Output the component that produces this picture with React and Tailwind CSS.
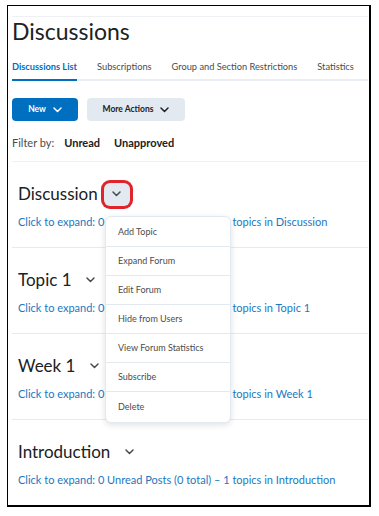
import React from "react";

const Chevron = ({ className = "", color = "#494c4e" }) => (
  <svg width="9" height="6" viewBox="0 0 9 6" className={className}>
    <path d="M1 1 L4.5 4.5 L8 1" fill="none" stroke={color} strokeWidth="1.5" strokeLinecap="round" strokeLinejoin="round" />
  </svg>
);

const sections = [
  { title: "Discussion", highlight: true },
  { title: "Topic 1" },
  { title: "Week 1" },
  { title: "Introduction" },
];

const menuItems = [
  "Add Topic",
  "Expand Forum",
  "Edit Forum",
  "Hide from Users",
  "View Forum Statistics",
  "Subscribe",
  "Delete",
];

export default function App() {
  return (
    <div className="w-[379px] h-[516px] bg-white pt-[5px] pl-[7px]" style={{ fontFamily: "Lato, 'Open Sans', sans-serif" }}>
      <div className="relative w-[364px] h-[502px] border border-r-2 border-b-2 border-black pl-[4px] pr-[1px] pt-[10px]">
        <div className="border-t border-[#eef0f3]" />
        <h1 className="h-[28px] text-[23px] leading-[28px] text-[#202122]">Discussions</h1>
        <div className="mt-[14px] flex gap-[20px] border-b-2 border-[#eaeef3] text-[9.25px] text-[#494c4e] h-[22px] whitespace-nowrap">
          <div className="relative font-bold text-[#006fbf] leading-[16px] h-[16px]">
            Discussions List
            <div className="absolute left-0 right-0 -bottom-[6px] h-[2px] bg-[#006fbf]" />
          </div>
          <div className="leading-[16px]">Subscriptions</div>
          <div className="leading-[16px]">Group and Section Restrictions</div>
          <div className="leading-[16px]">Statistics</div>
        </div>
        <div className="mt-[17px] flex gap-[9px]">
          <div className="w-[66px] h-[23px] rounded-[4px] bg-[#006fbf] flex items-center justify-center gap-[7px] text-white text-[8.5px] font-bold">
            New <Chevron color="#ffffff" />
          </div>
          <div className="w-[98px] h-[23px] rounded-[4px] bg-[#e3e9f1] flex items-center justify-center gap-[7px] text-[#202122] text-[8.5px] font-bold">
            More Actions <Chevron color="#202122" />
          </div>
        </div>
        <div className="mt-[12px] h-[20px] flex items-center text-[11px] text-[#494c4e]">
          <span>Filter by:</span>
          <span className="ml-[10px] font-bold text-[#202122]">Unread</span>
          <span className="ml-[14px] font-bold text-[#202122]">Unapproved</span>
        </div>
        <div className="mt-[8px] border-t border-[#eef0f3]" />
        {sections.map((s, i) => (
          <div key={s.title} className={`pl-[6px] pt-[18px] pb-[18px] ${i < 3 ? "border-b border-[#e6eaf0]" : ""}`}>
            <div className="h-[28px] flex items-center">
              <span className="text-[17px] leading-[28px] text-[#202122]">{s.title}</span>
              <div
                className={`ml-[6px] w-[26px] h-[23px] flex items-center justify-center rounded-[6px] ${
                  s.highlight ? "bg-[#e3e9f1] ring-[3px] ring-[#e0242c]" : ""
                }`}
              >
                <Chevron />
              </div>
            </div>
            <div className="mt-[7px] h-[14px] text-[11px] leading-[14px] text-[#1a78c2] whitespace-nowrap">
              Click to expand: 0 Unread Posts (0 total) – 1 topics in {s.title}
            </div>
          </div>
        ))}
        <div className="absolute left-[97px] top-[210px] w-[126px] bg-white rounded-[6px] border border-[#e3e9f1] shadow-[0_2px_6px_rgba(0,0,0,0.12)] py-[1px]">
          {menuItems.map((m, i) => (
            <div
              key={m}
              className={`h-[29px] flex items-center pl-[12px] text-[9px] text-[#494c4e] ${
                i < menuItems.length - 1 ? "border-b border-[#e3e9f1]" : ""
              }`}
            >
              {m}
            </div>
          ))}
        </div>
      </div>
    </div>
  );
}
